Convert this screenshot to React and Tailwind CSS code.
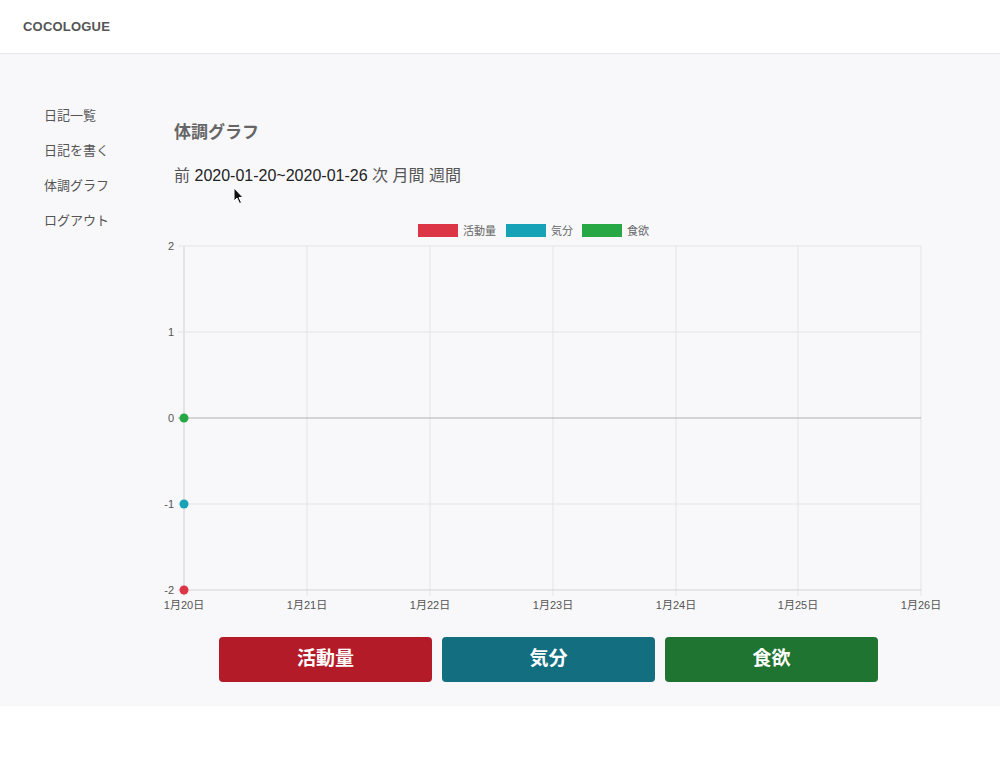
import React from "react";

const font = { fontFamily: '"Liberation Sans", "Noto Sans CJK JP", sans-serif' };

function Chart() {
  const xs = [34, 157, 280, 403, 526, 648, 771];
  const ys = [26, 112, 198, 284, 370];
  const yLabels = ["2", "1", "0", "-1", "-2"];
  const xLabels = ["1月20日", "1月21日", "1月22日", "1月23日", "1月24日", "1月25日", "1月26日"];
  return (
    <svg width="800" height="400" viewBox="0 0 800 400" className="block" style={font}>
      <rect x="268" y="4" width="40" height="13" fill="#dc3545" />
      <text x="313" y="14.5" fontSize="11" fill="#666">活動量</text>
      <rect x="356" y="4" width="40" height="13" fill="#17a2b8" />
      <text x="401" y="14.5" fontSize="11" fill="#666">気分</text>
      <rect x="432" y="4" width="40" height="13" fill="#28a745" />
      <text x="477" y="14.5" fontSize="11" fill="#666">食欲</text>
      {xs.map((x, i) => (
        <line key={"vx" + i} x1={x} y1={26} x2={x} y2={376} stroke={i === 0 ? "#cfcfcf" : "#e4e4e4"} strokeWidth="1" />
      ))}
      {ys.map((y, i) => (
        <line key={"hy" + i} x1={28} y1={y} x2={771} y2={y} stroke={i === 2 ? "#b0b0b0" : i === 4 ? "#d4d4d4" : "#e4e4e4"} strokeWidth="1" />
      ))}
      {ys.map((y, i) => (
        <text key={"yl" + i} x="24" y={y + 4} fontSize="11" fill="#555" textAnchor="end">{yLabels[i]}</text>
      ))}
      {xs.map((x, i) => (
        <text key={"xl" + i} x={x} y="389" fontSize="11" fill="#555" textAnchor="middle">{xLabels[i]}</text>
      ))}
      <circle cx="34" cy="198" r="4.5" fill="#28a745" />
      <circle cx="34" cy="284" r="4.5" fill="#17a2b8" />
      <circle cx="34" cy="370" r="4.5" fill="#dc3545" />
    </svg>
  );
}

export default function App() {
  return (
    <div className="relative w-[1000px] h-[760px] bg-white" style={font}>
      <header className="h-[54px] border-b border-[#e8e9eb] bg-white flex items-center pl-[23px]">
        <span className="text-[13px] font-bold text-[#555] tracking-[0.2px]">COCOLOGUE</span>
      </header>
      <main className="h-[652px] bg-[#f8f8fa] flex">
        <nav className="w-[150px] pl-[44px] pt-[44px] flex flex-col text-[13px] text-[#555] leading-[35px]">
          <span>日記一覧</span>
          <span>日記を書く</span>
          <span>体調グラフ</span>
          <span>ログアウト</span>
        </nav>
        <section className="flex-1 flex flex-col">
          <h1 className="pl-[24px] pt-[68px] text-[17px] leading-[22px] font-bold text-[#666]">体調グラフ</h1>
          <div className="pl-[24px] mt-[21px] text-[16px] leading-[22px] text-[#222] flex gap-[4.5px]">
            <span className="text-[#555]">前</span>
            <span>2020-01-20~2020-01-26</span>
            <span className="text-[#555]">次</span>
            <span className="text-[#555]">月間</span>
            <span className="text-[#555]">週間</span>
          </div>
          <div className="mt-[33px]">
            <Chart />
          </div>
          <div className="pl-[69px] mt-[17px] flex gap-[10px]">
            <button className="w-[213px] h-[45px] rounded-[4px] bg-[#b41b29] text-white text-[19px] font-bold">活動量</button>
            <button className="w-[213px] h-[45px] rounded-[4px] bg-[#136f80] text-white text-[19px] font-bold">気分</button>
            <button className="w-[213px] h-[45px] rounded-[4px] bg-[#1e7430] text-white text-[19px] font-bold">食欲</button>
          </div>
        </section>
      </main>
      <svg className="absolute left-[233px] top-[187px]" width="12" height="18" viewBox="0 0 12 18">
        <path d="M1 1 L1 14 L4 11 L6.5 16.5 L8.5 15.5 L6 10.5 L10 10.5 Z" fill="#111" stroke="#fff" strokeWidth="1" />
      </svg>
    </div>
  );
}
